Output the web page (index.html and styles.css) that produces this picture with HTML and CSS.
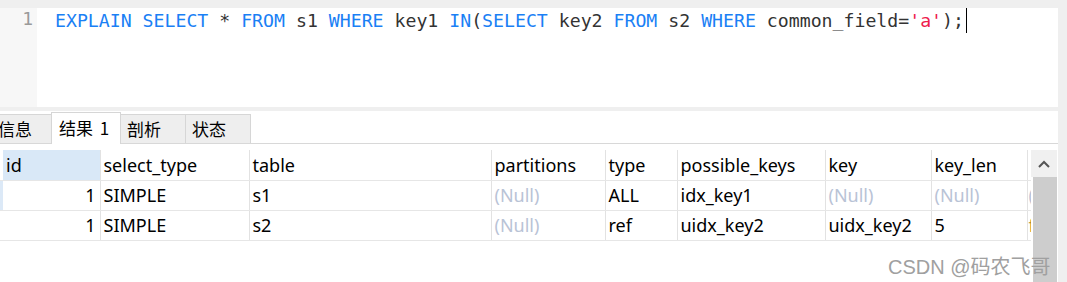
FILE: index.html
```html
<!DOCTYPE html>
<html lang="zh">

<head>
    <meta charset="UTF-8">
    <title>Query</title>
    <link rel="stylesheet" href="styles.css">
</head>

<body>
    <div class="app">
        <div class="editor">
            <div class="gutter">1</div>
            <div class="code"><span class="kw">EXPLAIN SELECT</span> * <span class="kw">FROM</span> s1 <span class="kw">WHERE</span> key1 <span class="kw">IN</span>(<span class="kw">SELECT</span> key2 <span class="kw">FROM</span> s2 <span class="kw">WHERE</span> common_field=<span class="str">'a'</span>);<span class="caret"></span></div>
        </div>

        <div class="results">
            <div class="tabs">
                <div class="tab info">信息</div>
                <div class="tab active">结果 1</div>
                <div class="tab">剖析</div>
                <div class="tab">状态</div>
            </div>

            <div class="grid-wrap">
                <table class="grid">
                    <colgroup>
                        <col style="width: 3px">
                        <col style="width: 97px">
                        <col style="width: 149px">
                        <col style="width: 242px">
                        <col style="width: 114px">
                        <col style="width: 72px">
                        <col style="width: 148px">
                        <col style="width: 106px">
                        <col style="width: 96px">
                        <col style="width: 4px">
                    </colgroup>
                    <thead>
                        <tr>
                            <th class="sel"></th>
                            <th class="focus">id</th>
                            <th>select_type</th>
                            <th>table</th>
                            <th>partitions</th>
                            <th>type</th>
                            <th>possible_keys</th>
                            <th>key</th>
                            <th>key_len</th>
                            <th class="cut"></th>
                        </tr>
                    </thead>
                    <tbody>
                        <tr>
                            <td class="sel current"></td>
                            <td class="num">1</td>
                            <td>SIMPLE</td>
                            <td>s1</td>
                            <td class="null">(Null)</td>
                            <td>ALL</td>
                            <td>idx_key1</td>
                            <td class="null">(Null)</td>
                            <td class="null">(Null)</td>
                            <td class="cut null">(</td>
                        </tr>
                        <tr>
                            <td class="sel"></td>
                            <td class="num">1</td>
                            <td>SIMPLE</td>
                            <td>s2</td>
                            <td class="null">(Null)</td>
                            <td>ref</td>
                            <td>uidx_key2</td>
                            <td>uidx_key2</td>
                            <td>5</td>
                            <td class="cut func">f</td>
                        </tr>
                    </tbody>
                </table>

                <div class="scrollbar">
                    <div class="arrow">
                        <svg width="12" height="8" viewBox="0 0 12 8">
                            <path d="M1 7 L6 2 L11 7" fill="none" stroke="#555" stroke-width="2"/>
                        </svg>
                    </div>
                    <div class="thumb"></div>
                </div>
            </div>
        </div>
    </div>

    <div class="watermark">CSDN @码农飞哥</div>
</body>

</html>
```

FILE: styles.css
```css
* {
    box-sizing: border-box;
}

html,
body {
    margin: 0;
    height: 100%;
}

body {
    width: 1067px;
    height: 282px;
    overflow: hidden;
    background: #efefef;
    position: relative;
    font-family: "Noto Sans", "Noto Sans CJK SC", sans-serif;
}

.app {
    margin-right: 9px;
    height: 100%;
    display: flex;
    flex-direction: column;
}

/* sql editor */
.editor {
    margin-top: 8px;
    height: 99px;
    display: flex;
    background: #fff;
    flex-shrink: 0;
}

.gutter {
    width: 37px;
    background: #f7f7f7;
    color: #9a9a9a;
    font-family: "DejaVu Sans Mono", monospace;
    font-size: 18px;
    text-align: right;
    padding: 0 4px 0 0;
    line-height: 22px;
}

.code {
    flex: 1;
    padding: 0 0 0 18px;
    font-family: "DejaVu Sans Mono", monospace;
    font-size: 18.2px;
    line-height: 22px;
    color: #333;
    white-space: pre;
}

.kw {
    color: #1a80f5;
}

.str {
    color: #ee1d4d;
}

.caret {
    display: inline-block;
    width: 1px;
    height: 25px;
    background: #000;
    vertical-align: -6px;
    margin-left: 2px;
}

/* results panel */
.results {
    margin-top: 4px;
    flex: 1;
    background: #fff;
    padding-top: 2px;
}

.tabs {
    display: flex;
    height: 31px;
    border-bottom: 1px solid #d8d8d8;
    align-items: flex-end;
}

.tab {
    height: 29px;
    background: #eeeeee;
    border: 1px solid #d6d6d6;
    border-bottom: none;
    margin-left: -1px;
    padding: 0 0 0 6px;
    font-family: "Noto Sans CJK SC", sans-serif;
    font-size: 17px;
    line-height: 27px;
    color: #000;
    width: 66px;
    white-space: pre;
}

.tab.info {
    width: 64px;
    margin-left: -12px;
    padding-left: 9px;
}

.tab.active {
    background: #fff;
    height: 32px;
    margin-bottom: -1px;
    width: 70px;
    padding-left: 7px;
    line-height: 29px;
    word-spacing: 3px;
}

.grid-wrap {
    margin-top: 6px;
    display: flex;
    align-items: flex-start;
}

.grid {
    width: 1031px;
    table-layout: fixed;
    border-collapse: collapse;
    font-size: 18px;
    color: #000;
}

.grid th,
.grid td {
    border-right: 1px solid #e2e2e2;
    border-bottom: 1px solid #e6e6e6;
    padding: 0 3px;
    text-align: left;
    font-weight: normal;
    white-space: nowrap;
    overflow: hidden;
    line-height: 24px;
}

.grid th {
    height: 30px;
}

.grid td {
    height: 30px;
}

.grid .sel {
    padding: 0;
    border-right: none;
}

.grid .current {
    background: #dce9f7;
}

.grid th.focus {
    background: #d9e8f7;
}

.grid td.num {
    text-align: right;
    padding-right: 4px;
}

.grid .null {
    color: #b9c3d6;
}

.grid .cut {
    padding-left: 1px;
    border-right: none;
}

.grid .func {
    color: #b58a2a;
}

.scrollbar {
    width: 26px;
    display: flex;
    flex-direction: column;
    height: 140px;
}

.arrow {
    height: 27px;
    background: #f0f0f0;
    display: flex;
    align-items: center;
    justify-content: center;
}

.thumb {
    flex: 1;
    margin-left: 2px;
    background: #cdcdcd;
}

.watermark {
    position: absolute;
    left: 888px;
    top: 251px;
    font-size: 20px;
    color: #a0a0a0;
    font-family: "Liberation Sans", "Noto Sans CJK SC", sans-serif;
}
```
